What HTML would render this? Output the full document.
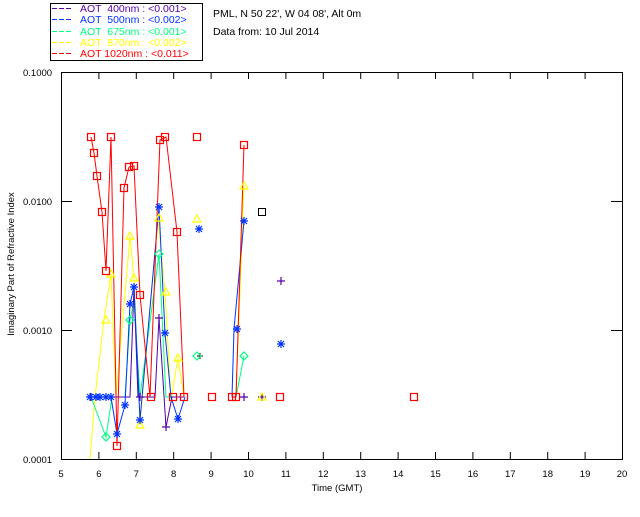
<!DOCTYPE html>
<html><head><style>
body{margin:0;background:#fff;width:640px;height:512px;overflow:hidden}
text{font-family:"Liberation Sans",sans-serif;font-size:10.5px}
</style></head><body>
<svg width="640" height="512" xmlns="http://www.w3.org/2000/svg">
<defs>
<g id="sq"><rect x="-3.5" y="-3.5" width="7" height="7" fill="none" stroke="#f00" stroke-width="1.2"/></g>
<g id="st" stroke="#0033ff" stroke-width="1.2"><path d="M-4 0H4M0-4V4M-3-3L3 3M-3 3L3-3"/></g>
<g id="tr"><path d="M0-4L4 3H-4Z" fill="none" stroke="#ff0" stroke-width="1.2"/></g>
<g id="di"><path d="M0-4L4 0L0 4L-4 0Z" fill="none" stroke="#00ff80" stroke-width="1.2"/></g>
<g id="cr" stroke="#5500aa" stroke-width="1.2"><path d="M-4 0H4M0-4V4"/></g>
</defs>
<rect x="50.5" y="3.5" width="152" height="57" fill="#fff" stroke="#000"/>
<g stroke-width="1">
<path d="M52 8.5H73" stroke="#5500aa" stroke-dasharray="5,2"/>
<path d="M52 19.5H73" stroke="#0033ff" stroke-dasharray="5,2"/>
<path d="M52 31.5H73" stroke="#00ff80" stroke-dasharray="5,2"/>
<path d="M52 42.5H73" stroke="#ff0" stroke-dasharray="5,2"/>
<path d="M52 53.5H73" stroke="#f00" stroke-dasharray="5,2"/>
</g>
<text x="80" y="12" fill="#5500aa" xml:space="preserve">AOT  400nm : &lt;0.001&gt;</text>
<text x="80" y="23" fill="#0033ff" xml:space="preserve">AOT  500nm : &lt;0.002&gt;</text>
<text x="80" y="35" fill="#00ff80" xml:space="preserve">AOT  675nm : &lt;0.001&gt;</text>
<text x="80" y="46" fill="#ff0" xml:space="preserve">AOT  870nm : &lt;0.002&gt;</text>
<text x="80" y="57" fill="#f00" xml:space="preserve">AOT 1020nm : &lt;0.011&gt;</text>
<text x="213" y="17" fill="#000">PML, N 50 22', W 04 08', Alt 0m</text>
<text x="213" y="35" fill="#000">Data from: 10 Jul 2014</text>
<rect x="61.5" y="72.5" width="561" height="387" fill="none" stroke="#000"/>
<g stroke="#000">
<path d="M98.9 72v7M136.3 72v7M173.7 72v7M211.1 72v7M248.5 72v7M285.9 72v7M323.3 72v7M360.7 72v7M398.1 72v7M435.5 72v7M472.9 72v7M510.3 72v7M547.7 72v7M585.1 72v7"/>
<path d="M98.9 459v-7M136.3 459v-7M173.7 459v-7M211.1 459v-7M248.5 459v-7M285.9 459v-7M323.3 459v-7M360.7 459v-7M398.1 459v-7M435.5 459v-7M472.9 459v-7M510.3 459v-7M547.7 459v-7M585.1 459v-7"/>
<path d="M61 201.5h11M61 330.5h11M622 201.5h-11M622 330.5h-11"/>
</g>
<g fill="#000">
<text x="23" y="76" style="font-size:9.5px">0.1000</text>
<text x="23" y="205" style="font-size:9.5px">0.0100</text>
<text x="23" y="334" style="font-size:9.5px">0.0010</text>
<text x="23" y="463" style="font-size:9.5px">0.0001</text>
</g>
<g text-anchor="middle" fill="#000">
<text x="61" y="477" style="font-size:9.5px">5</text><text x="98.9" y="477" style="font-size:9.5px">6</text><text x="136.3" y="477" style="font-size:9.5px">7</text><text x="173.7" y="477" style="font-size:9.5px">8</text><text x="211.1" y="477" style="font-size:9.5px">9</text><text x="248.5" y="477" style="font-size:9.5px">10</text><text x="285.9" y="477" style="font-size:9.5px">11</text><text x="323.3" y="477" style="font-size:9.5px">12</text><text x="360.7" y="477" style="font-size:9.5px">13</text><text x="398.1" y="477" style="font-size:9.5px">14</text><text x="435.5" y="477" style="font-size:9.5px">15</text><text x="472.9" y="477" style="font-size:9.5px">16</text><text x="510.3" y="477" style="font-size:9.5px">17</text><text x="547.7" y="477" style="font-size:9.5px">18</text><text x="585.1" y="477" style="font-size:9.5px">19</text><text x="622" y="477" style="font-size:9.5px">20</text>
<text x="337" y="491" style="font-size:9.5px">Time (GMT)</text>
</g>
<text transform="translate(14,264) rotate(-90)" text-anchor="middle" fill="#000" style="font-size:9.5px">Imaginary Part of Refractive Index</text>
<polyline fill="none" stroke="#ff0" points="90,459 95,397 104,320 111,274 116,397 130,236 134,278 140,425 158,218 165,292 171,400 178,358 184,397"/>
<polyline fill="none" stroke="#ff0" points="236,397 244,186"/>
<polyline fill="none" stroke="#00ff80" points="91,397 106,437 112,397 125,397 130,320 134,301 140,397 159,254 166,397 184,397"/>
<polyline fill="none" stroke="#00ff80" points="236,397 244,356"/>
<polyline fill="none" stroke="#5500aa" points="91,397 117,397 125,397 130,397 134,287 138,397 155,397 159,318 166,427 172,397 184,397"/>
<polyline fill="none" stroke="#0033ff" points="90,397 111,397 117,434 125,405 130,304 134,287 140,420 159,207 165,333 171,397 178,419 185,397"/>
<polyline fill="none" stroke="#0033ff" points="232,397 234,329 244,221"/>
<polyline fill="none" stroke="#f00" points="91,137 94,153 97,176 102,212 106,271 111,137 117,446 124,188 129,167 134,166 140,295 150,397 160,140 166,137 177,232 184,397"/>
<polyline fill="none" stroke="#f00" points="232,397 236,397 244,145"/>
<g>
<use href="#cr" x="91" y="397"/><use href="#cr" x="159" y="318"/><use href="#cr" x="166" y="427"/><use href="#cr" x="140" y="397"/><use href="#cr" x="244" y="397"/><use href="#cr" x="281" y="281"/><use href="#cr" x="262" y="397"/>
<path d="M197 356h6M200 353v6" stroke="#000"/>
<rect x="258.5" y="208.5" width="7" height="7" fill="none" stroke="#000"/>
<use href="#di" x="106" y="437"/><use href="#di" x="130" y="320"/><use href="#di" x="159" y="254"/><use href="#di" x="244" y="356"/><use href="#di" x="197" y="356"/>
<use href="#tr" x="106" y="320"/><use href="#tr" x="111" y="274"/><use href="#tr" x="130" y="236"/><use href="#tr" x="134" y="278"/><use href="#tr" x="140" y="425"/><use href="#tr" x="159" y="218"/><use href="#tr" x="166" y="292"/><use href="#tr" x="178" y="358"/><use href="#tr" x="197" y="219"/><use href="#tr" x="244" y="186"/><use href="#tr" x="262" y="397"/>
<use href="#st" x="90" y="397"/><use href="#st" x="96" y="397"/><use href="#st" x="100" y="397"/><use href="#st" x="106" y="397"/><use href="#st" x="111" y="397"/><use href="#st" x="117" y="434"/><use href="#st" x="125" y="405"/><use href="#st" x="130" y="304"/><use href="#st" x="134" y="287"/><use href="#st" x="140" y="420"/><use href="#st" x="159" y="207"/><use href="#st" x="165" y="333"/><use href="#st" x="178" y="419"/><use href="#st" x="199" y="229"/><use href="#st" x="237" y="329"/><use href="#st" x="244" y="221"/><use href="#st" x="281" y="344"/>
<use href="#sq" x="91" y="137"/><use href="#sq" x="94" y="153"/><use href="#sq" x="97" y="176"/><use href="#sq" x="102" y="212"/><use href="#sq" x="106" y="271"/><use href="#sq" x="111" y="137"/><use href="#sq" x="117" y="446"/><use href="#sq" x="124" y="188"/><use href="#sq" x="129" y="167"/><use href="#sq" x="134" y="166"/><use href="#sq" x="140" y="295"/><use href="#sq" x="151" y="397"/><use href="#sq" x="160" y="140"/><use href="#sq" x="165" y="137"/><use href="#sq" x="177" y="232"/><use href="#sq" x="173" y="397"/><use href="#sq" x="184" y="397"/><use href="#sq" x="197" y="137"/><use href="#sq" x="212" y="397"/><use href="#sq" x="232" y="397"/><use href="#sq" x="236" y="397"/><use href="#sq" x="244" y="145"/><use href="#sq" x="280" y="397"/><use href="#sq" x="414" y="397"/>
</g>
</svg>
</body></html>
